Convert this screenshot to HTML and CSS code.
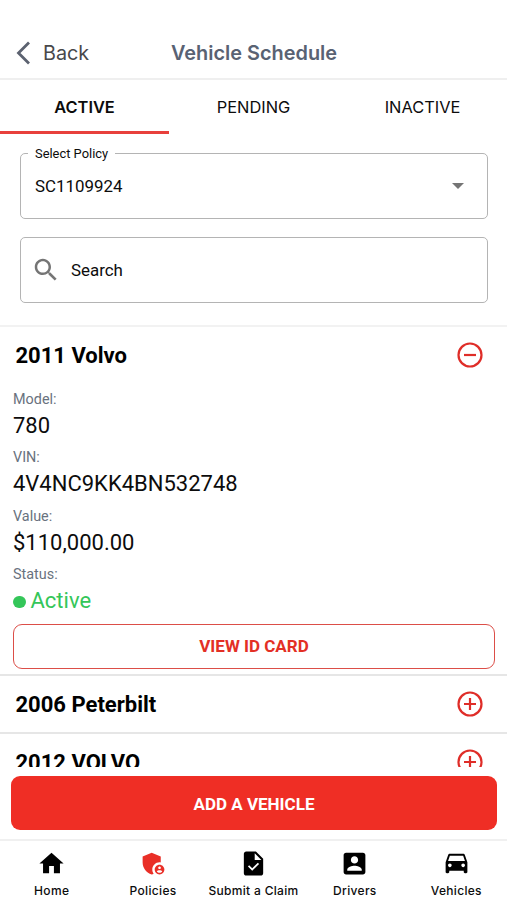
FILE: index.html
```html
<!DOCTYPE html>
<html lang="en">
<head>
<meta charset="utf-8">
<title>Vehicle Schedule</title>
<link rel="stylesheet" href="styles.css">
</head>
<body>
<div class="app">
  <header class="topbar">
    <a class="back">
      <svg width="15" height="24" viewBox="0 0 15 24"><path d="M13 1.5 2.5 12 13 22.5" fill="none" stroke="currentColor" stroke-width="2.8"/></svg>
      <span>Back</span>
    </a>
    <h1>Vehicle Schedule</h1>
  </header>
  <nav class="tabs">
    <a class="tab selected">ACTIVE</a>
    <a class="tab">PENDING</a>
    <a class="tab">INACTIVE</a>
  </nav>
  <section class="filters">
    <fieldset class="field select">
      <legend>Select Policy</legend>
      <div class="value">
        <span>SC1109924</span>
        <svg width="12" height="6" viewBox="0 0 12 6"><path d="M0 0h12L6 6z" fill="#757575"/></svg>
      </div>
    </fieldset>
    <div class="field search">
      <svg width="30" height="30" viewBox="0 0 24 24"><path fill="#757575" d="M15.5 14h-.79l-.28-.27C15.41 12.59 16 11.11 16 9.5 16 5.91 13.09 3 9.5 3S3 5.91 3 9.5 5.91 16 9.5 16c1.61 0 3.09-.59 4.23-1.57l.27.28v.79l5 4.99L20.49 19l-4.99-5zm-6 0C7.01 14 5 11.99 5 9.5S7.01 5 9.5 5 14 7.01 14 9.5 11.99 14 9.5 14z"/></svg>
      <span>Search</span>
    </div>
  </section>
  <main class="list">
    <article class="vehicle open">
      <div class="row">
        <h2>2011 Volvo</h2>
        <svg class="toggle" viewBox="0 0 26 26"><circle cx="13" cy="13" r="11.5"/><path d="M7 13h12"/></svg>
      </div>
      <dl>
        <dt>Model:</dt><dd>780</dd>
        <dt>VIN:</dt><dd>4V4NC9KK4BN532748</dd>
        <dt>Value:</dt><dd>$110,000.00</dd>
        <dt>Status:</dt><dd class="status"><i></i>Active</dd>
      </dl>
      <button class="outline">VIEW ID CARD</button>
    </article>
    <article class="vehicle">
      <div class="row">
        <h2>2006 Peterbilt</h2>
        <svg class="toggle" viewBox="0 0 26 26"><circle cx="13" cy="13" r="11.5"/><path d="M7 13h12M13 7v12"/></svg>
      </div>
    </article>
    <article class="vehicle">
      <div class="row">
        <h2>2012 VOLVO</h2>
        <svg class="toggle" viewBox="0 0 26 26"><circle cx="13" cy="13" r="11.5"/><path d="M7 13h12M13 7v12"/></svg>
      </div>
    </article>
  </main>
  <div class="action"><button class="primary">ADD A VEHICLE</button></div>
  <nav class="bottom">
    <a><svg viewBox="0 0 24 24"><path d="M10 20v-6h4v6h5v-8h3L12 3 2 12h3v8z"/></svg><span>Home</span></a>
    <a class="current"><svg viewBox="0 0 24 24"><path d="M17 11c.34 0 .67.04 1 .09V6.27L10.5 3 3 6.27v4.91c0 4.54 3.2 8.79 7.5 9.82.55-.13 1.08-.32 1.6-.55-.69-.98-1.1-2.17-1.1-3.45 0-3.31 2.69-6 6-6z"/><path d="M17 13c-2.21 0-4 1.79-4 4s1.79 4 4 4 4-1.79 4-4-1.79-4-4-4zm0 1.38c.62 0 1.12.51 1.12 1.12s-.51 1.12-1.12 1.12-1.12-.51-1.12-1.12.5-1.12 1.12-1.12zm0 5.37c-.93 0-1.74-.46-2.24-1.17.05-.72 1.51-1.08 2.24-1.08s2.19.36 2.24 1.08c-.5.71-1.31 1.17-2.24 1.17z"/></svg><span>Policies</span></a>
    <a><svg viewBox="0 0 24 24"><path d="M14 2H6c-1.1 0-1.99.9-1.99 2L4 20c0 1.1.89 2 1.99 2H18c1.1 0 2-.9 2-2V8l-6-6zm-3.06 16L7.4 14.46l1-1 2.54 2.54 4.65-4.65 1 1L10.94 18zM13 9V3.5L18.5 9H13z"/></svg><span>Submit a Claim</span></a>
    <a><svg viewBox="0 0 24 24"><path d="M3 5v14c0 1.1.89 2 2 2h14c1.1 0 2-.9 2-2V5c0-1.1-.9-2-2-2H5c-1.11 0-2 .9-2 2zm12 4c0 1.66-1.34 3-3 3s-3-1.34-3-3 1.34-3 3-3 3 1.34 3 3zm-9 8c0-2 4-3.1 6-3.1s6 1.1 6 3.1v1H6v-1z"/></svg><span>Drivers</span></a>
    <a><svg viewBox="0 0 24 24"><path d="M18.92 5.01C18.72 4.42 18.16 4 17.5 4h-11c-.66 0-1.21.42-1.42 1.01L3 11v8c0 .55.45 1 1 1h1c.55 0 1-.45 1-1v-1h12v1c0 .55.45 1 1 1h1c.55 0 1-.45 1-1v-8l-2.08-5.99zM6.5 15c-.83 0-1.5-.67-1.5-1.5S5.67 12 6.5 12s1.5.67 1.5 1.5S7.33 15 6.5 15zm11 0c-.83 0-1.5-.67-1.5-1.5s.67-1.5 1.5-1.5 1.5.67 1.5 1.5-.67 1.5-1.5 1.5zM5 10l1.5-4.5h11L19 10H5z"/></svg><span>Vehicles</span></a>
  </nav>
</div>
</body>
</html>
```

FILE: styles.css
```css
* { box-sizing: border-box; }
body { margin: 0; background: #fff; color: #0c0c0c; font-family: Roboto, sans-serif; }
.app { width: 507px; height: 900px; display: flex; flex-direction: column; overflow: hidden; }
h1, h2, dl, dd { margin: 0; }

.topbar {
  height: 80px; flex: none; padding-top: 27px; border-bottom: 2px solid #efefef;
  display: grid; grid-template-columns: 1fr auto 1fr; align-items: center;
  font-family: Inter, sans-serif;
}
.back { display: flex; align-items: center; gap: 12px; padding-left: 16px; font-size: 19.8px; color: #48484a; }
.back svg { color: #5c6270; }
h1 { padding-left: 1px; font-size: 19.9px; font-weight: 600; color: #596273; }

.tabs { height: 54px; flex: none; display: grid; grid-template-columns: repeat(3, 1fr); font-family: Inter, sans-serif; }
.tab { height: 54px; text-align: center; font-size: 16.4px; line-height: 54px; border-bottom: 3px solid transparent; }
.tab.selected { font-weight: 600; border-color: #e8403c; }

.filters { flex: none; height: 191px; padding: 12px 19px 0 20px; display: flex; flex-direction: column; gap: 18px; }
.field { border: 1px solid #b4b4b4; border-radius: 5px; font-size: 16.9px; margin: 0; }
.select { height: 73px; padding: 0 23px 0 14px; }
.select legend { font-size: 12.9px; line-height: 15px; padding: 0 7px; margin-left: -7px; }
.value { height: 49px; display: flex; align-items: center; justify-content: space-between; }
.search { height: 66px; padding: 0 10px; gap: 10px; display: flex; align-items: center; }

.list { flex: 1; min-height: 0; overflow: hidden; }
.vehicle { border-top: 2px solid #e6e6e6; }
.vehicle.open { border-color: #f2f2f2; height: 349px; }
.row { height: 56px; padding: 0 24px 0 15.5px; display: flex; align-items: center; justify-content: space-between; }
h2 { font-size: 22px; font-weight: 700; color: #000; }
.toggle { width: 26px; height: 26px; fill: none; stroke: #df2d28; stroke-width: 2.2; }
dl { padding: 6px 13px 0; }
dt { font-size: 14.4px; line-height: 21px; color: #69727e; }
dd { font-size: 22px; line-height: 32px; height: 37.4px; }
.status { display: flex; align-items: flex-start; gap: 5px; color: #34c659; }
.status i { width: 12.5px; height: 12.5px; border-radius: 50%; background: currentColor; margin-top: 10.5px; }
button { font-family: inherit; font-weight: 700; font-size: 17px; display: block; padding: 0; }
.outline { width: 482px; height: 45px; margin: 1px 0 0 13px; color: #e32f25; background: #fff; border: 1px solid #dc4e48; border-radius: 9px; }

.action { flex: none; height: 72px; padding: 9px 10px 0 11px; }
.primary { width: 100%; height: 54px; padding-top: 1px; border: 0; border-radius: 9px; background: #ef2e25; color: #fff; }

.bottom { flex: none; height: 61px; border-top: 2px solid #f0f0f0; display: grid; grid-template-columns: repeat(5, 1fr); font-family: Inter, sans-serif; }
.bottom a { display: flex; flex-direction: column; align-items: center; padding-top: 8px; white-space: nowrap; font-size: 12px; font-weight: 500; line-height: 15px; letter-spacing: .32px; }
.bottom a:first-child { padding-left: 2px; }
.bottom a:nth-child(2) { padding-left: 2px; }
.bottom svg { width: 29px; height: 29px; margin-bottom: 5px; fill: #000; }
.bottom .current svg { fill: #e92f27; }
```
